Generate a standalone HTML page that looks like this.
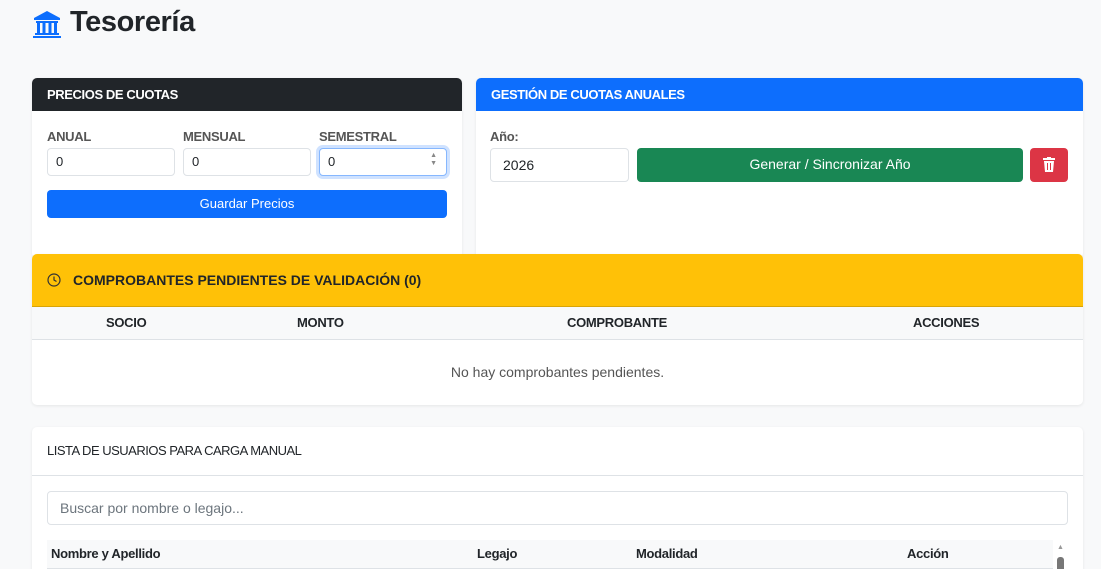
<!DOCTYPE html>
<html><head><meta charset="utf-8"><style>
*{box-sizing:border-box;margin:0;padding:0}
html,body{width:1101px;height:569px;overflow:hidden}
body{background:#f8f9fa;font-family:"Liberation Sans",Arial,sans-serif;color:#212529;position:relative}
.abs{position:absolute}
h1{position:absolute;left:70px;top:6px;font-size:29px;font-weight:bold;letter-spacing:-0.4px}
.card{position:absolute;background:#fff;border-radius:5px;box-shadow:0 1px 3px rgba(0,0,0,.08);overflow:hidden}
.hdr{position:absolute;left:0;right:0;top:0;height:33px;font-size:13px;font-weight:bold;padding:9px 15px;letter-spacing:-0.4px}
.lbl{position:absolute;font-size:13px;font-weight:bold;color:#555;letter-spacing:-0.3px}
.inp{position:absolute;background:#fff;border:1px solid #dee2e6;border-radius:4px;font-size:13px;padding:5px 8px}
.btn{position:absolute;border-radius:4px;color:#fff;text-align:center;font-size:13px}
.th{position:absolute;font-size:13px;font-weight:bold;letter-spacing:-0.3px}
</style></head><body>
<svg class="abs" style="left:33px;top:10px" width="28" height="28" viewBox="0 0 28 28"><path d="M14 1 L27 8 L27 10 L1 10 L1 8 Z" fill="#0d6efd"/><rect x="3" y="11" width="22" height="2" fill="#0d6efd"/><rect x="4" y="13" width="3" height="10" fill="#0d6efd"/><rect x="9.5" y="13" width="3" height="10" fill="#0d6efd"/><rect x="15.5" y="13" width="3" height="10" fill="#0d6efd"/><rect x="21" y="13" width="3" height="10" fill="#0d6efd"/><rect x="2" y="23" width="24" height="2" fill="#0d6efd"/><rect x="0" y="26" width="28" height="2" fill="#0d6efd"/></svg>
<h1>Tesorería</h1>

<div class="card" style="left:32px;top:78px;width:430px;height:180px">
 <div class="hdr" style="background:#212529;color:#fff">PRECIOS DE CUOTAS</div>
 <div class="lbl" style="left:15px;top:51px">ANUAL</div>
 <div class="lbl" style="left:151px;top:51px">MENSUAL</div>
 <div class="lbl" style="left:287px;top:51px">SEMESTRAL</div>
 <div class="inp" style="left:15px;top:70px;width:128px;height:28px">0</div>
 <div class="inp" style="left:151px;top:70px;width:128px;height:28px">0</div>
 <div class="inp" style="left:287px;top:70px;width:128px;height:28px;border-color:#86b7fe;box-shadow:0 0 0 3px rgba(13,110,253,.2)">0<span style="position:absolute;right:9px;top:3px;font-size:7px;color:#888;line-height:8px">▲<br>▼</span></div>
 <div class="btn" style="left:15px;top:112px;width:400px;height:28px;background:#0d6efd;padding-top:6px">Guardar Precios</div>
</div>

<div class="card" style="left:476px;top:78px;width:607px;height:180px">
 <div class="hdr" style="background:#0d6efd;color:#fff">GESTIÓN DE CUOTAS ANUALES</div>
 <div class="lbl" style="left:14px;top:51px">Año:</div>
 <div class="inp" style="left:14px;top:70px;width:139px;height:34px;padding:8px 12px;font-size:14px">2026</div>
 <div class="btn" style="left:161px;top:70px;width:386px;height:34px;background:#198754;padding-top:8px;font-size:14px">Generar / Sincronizar Año</div>
 <div class="btn" style="left:554px;top:70px;width:38px;height:34px;background:#dc3545">
  <svg style="margin-top:9px" width="12" height="15" viewBox="0 0 12 15"><rect x="0" y="1" width="12" height="2" fill="#fff"/><rect x="4" y="0" width="4" height="2" fill="#fff"/><path d="M1 4 H11 L10 15 H2 Z" fill="#fff"/><rect x="4" y="6" width="1" height="7" fill="#dc3545"/><rect x="7" y="6" width="1" height="7" fill="#dc3545"/></svg>
 </div>
</div>

<div class="card" style="left:32px;top:254px;width:1051px;height:151px;border-radius:5px">
 <div class="hdr" style="background:#ffc107;height:52px;padding:18px 15px 0 41px;font-size:14px;letter-spacing:0">COMPROBANTES PENDIENTES DE VALIDACIÓN (0)</div>
 <svg class="abs" style="left:15px;top:19px" width="14" height="14" viewBox="0 0 14 14"><circle cx="7" cy="7" r="6" fill="none" stroke="#333" stroke-width="1.2"/><path d="M7 3.5V7L9.5 8.5" fill="none" stroke="#333" stroke-width="1.2"/></svg>
 <div class="abs" style="left:0;right:0;top:52px;height:34px;background:#f8f9fa;border-top:1px solid #d9a406;border-bottom:1px solid #dee2e6"></div>
 <div class="th" style="left:74px;top:61px">SOCIO</div>
 <div class="th" style="left:265px;top:61px">MONTO</div>
 <div class="th" style="left:535px;top:61px">COMPROBANTE</div>
 <div class="th" style="left:881px;top:61px">ACCIONES</div>
 <div class="abs" style="left:0;right:0;top:110px;text-align:center;font-size:14px;color:#555">No hay comprobantes pendientes.</div>
</div>

<div class="card" style="left:32px;top:427px;width:1051px;height:160px">
 <div class="hdr" style="height:49px;padding:16px 15px;font-weight:normal;color:#212529;border-bottom:1px solid #dee2e6;letter-spacing:-0.5px">LISTA DE USUARIOS PARA CARGA MANUAL</div>
 <div class="inp" style="left:15px;top:64px;width:1021px;height:34px;padding:8px 12px;font-size:14px;color:#6c757d">Buscar por nombre o legajo...</div>
 <div class="abs" style="left:15px;top:113px;width:1006px;height:29px;background:#f8f9fa;border-bottom:1px solid #dee2e6"></div>
 <div class="th" style="left:19px;top:119px">Nombre y Apellido</div>
 <div class="th" style="left:445px;top:119px">Legajo</div>
 <div class="th" style="left:604px;top:119px">Modalidad</div>
 <div class="th" style="left:875px;top:119px">Acción</div>
 <div class="abs" style="left:1025px;top:117px;font-size:7px;color:#999">▲</div>
 <div class="abs" style="left:1025px;top:130px;width:7px;height:20px;background:#777;border-radius:3px"></div>
</div>
</body></html>
